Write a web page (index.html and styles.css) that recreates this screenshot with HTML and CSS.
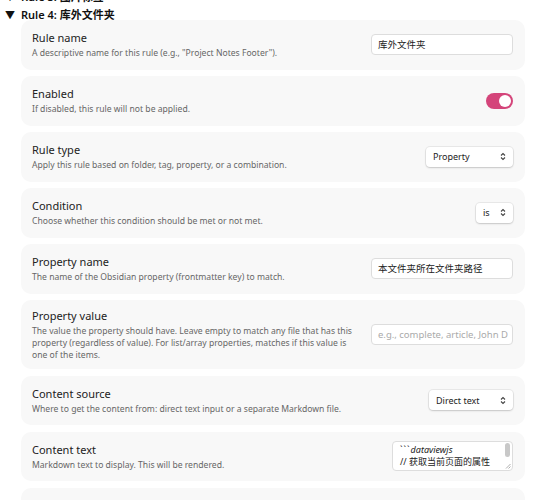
FILE: index.html
```html
<!DOCTYPE html>
<html>
<head>
<meta charset="utf-8">
<link rel="stylesheet" href="styles.css">
</head>
<body>
<div class="page">
  <div class="close">
    <svg width="9" height="9" viewBox="0 0 9 9"><path d="M1 1L8 8M8 1L1 8" stroke="#777" stroke-width="1" fill="none"/></svg>
  </div>
  <div class="rule-head prev"><span class="tri">▼</span><span>Rule 3: 图片标签</span></div>
  <div class="rule-head"><span class="tri">▼</span><span>Rule 4: 库外文件夹</span></div>
  <div class="list">
    <div class="item">
      <div class="info"><div class="name">Rule name</div><div class="desc">A descriptive name for this rule (e.g., "Project Notes Footer").</div></div>
      <div class="control"><div class="input">库外文件夹</div></div>
    </div>
    <div class="item">
      <div class="info"><div class="name">Enabled</div><div class="desc">If disabled, this rule will not be applied.</div></div>
      <div class="control"><div class="toggle"><div class="knob"></div></div></div>
    </div>
    <div class="item">
      <div class="info"><div class="name">Rule type</div><div class="desc">Apply this rule based on folder, tag, property, or a combination.</div></div>
      <div class="control"><div class="select sel-prop"><span>Property</span><svg width="6" height="9" viewBox="0 0 6 9"><path d="M1 3.5L3 1.5L5 3.5M1 5.5L3 7.5L5 5.5" stroke="#444" stroke-width="1.1" fill="none"/></svg></div></div>
    </div>
    <div class="item">
      <div class="info"><div class="name">Condition</div><div class="desc">Choose whether this condition should be met or not met.</div></div>
      <div class="control"><div class="select sel-is"><span>is</span><svg width="6" height="9" viewBox="0 0 6 9"><path d="M1 3.5L3 1.5L5 3.5M1 5.5L3 7.5L5 5.5" stroke="#444" stroke-width="1.1" fill="none"/></svg></div></div>
    </div>
    <div class="item">
      <div class="info"><div class="name">Property name</div><div class="desc">The name of the Obsidian property (frontmatter key) to match.</div></div>
      <div class="control"><div class="input">本文件夹所在文件夹路径</div></div>
    </div>
    <div class="item">
      <div class="info"><div class="name">Property value</div><div class="desc narrow">The value the property should have. Leave empty to match any file that has this property (regardless of value). For list/array properties, matches if this value is one of the items.</div></div>
      <div class="control"><div class="input placeholder">e.g., complete, article, John D</div></div>
    </div>
    <div class="item">
      <div class="info"><div class="name">Content source</div><div class="desc">Where to get the content from: direct text input or a separate Markdown file.</div></div>
      <div class="control"><div class="select sel-src"><span>Direct text</span><svg width="6" height="9" viewBox="0 0 6 9"><path d="M1 3.5L3 1.5L5 3.5M1 5.5L3 7.5L5 5.5" stroke="#444" stroke-width="1.1" fill="none"/></svg></div></div>
    </div>
    <div class="item">
      <div class="info"><div class="name">Content text</div><div class="desc">Markdown text to display. This will be rendered.</div></div>
      <div class="control">
        <div class="textarea">
          <div class="code"><div><span class="ticks">```</span><span class="it">dataviewjs</span></div><div>// 获取当前页面的属性</div></div>
          <div class="scroll"><div class="thumb"></div></div>
          <svg class="grip" width="6" height="6" viewBox="0 0 6 6"><path d="M5.5 1L1 5.5M5.5 3.5L3.5 5.5" stroke="#999" stroke-width="0.8"/></svg>
        </div>
      </div>
    </div>
    <div class="item"></div>
  </div>
</div>
</body>
</html>
```
FILE: styles.css
```css
html, body { margin: 0; padding: 0; background: #fff; }
body { font-family: "Noto Sans", "Noto Sans CJK SC", sans-serif; color: #222; overflow: hidden; height: 500px; }
.page { position: relative; padding: 0 31px 0 0; }
.close { position: absolute; right: 4px; top: 2px; width: 9px; height: 9px; }
.close svg { display: block; }
.rule-head { display: flex; align-items: center; height: 18px; font-size: 11px; font-weight: 600; color: #111; padding-left: 5px; gap: 5px; }
.rule-head.prev { margin-top: -13px; }
.rule-head .tri { font-size: 10px; width: 11px; }
.list { padding-left: 21px; margin-top: -3px; display: flex; flex-direction: column; gap: 6.5px; }
.item { background: #f8f8f8; border-radius: 10px; min-height: 49.5px; box-sizing: border-box; padding: 8px 12px 8px 11px; display: flex; align-items: center; }
.info { flex: 1; min-width: 0; }
.name { font-size: 11px; line-height: 16px; color: #222; }
.desc { font-size: 8.6px; line-height: 12px; color: #666; margin-top: 1px; }
.desc.narrow { max-width: 325px; }
.control { display: flex; justify-content: flex-end; margin-left: 16px; }
.input { width: 142px; height: 21px; box-sizing: border-box; border: 1px solid #ddd; border-radius: 4px; background: #fff; font-size: 9.5px; line-height: 19px; padding: 0 6px; white-space: nowrap; overflow: hidden; color: #222; }
.input.placeholder { color: #aaa; }
.toggle { width: 27px; height: 16px; border-radius: 8px; background: #d4457a; position: relative; margin-top: 1px; }
.knob { position: absolute; right: 2px; top: 2px; width: 12px; height: 12px; border-radius: 50%; background: #fff; }
.select { height: 20px; box-sizing: border-box; border-radius: 4px; background: #fff; box-shadow: 0 0 0 1px rgba(0,0,0,0.06), 0 1px 2px rgba(0,0,0,0.15); display: flex; align-items: center; justify-content: space-between; padding: 0 7px 0 7px; font-size: 9px; color: #222; }
.sel-prop { width: 87px; }
.sel-is { width: 37px; }
.sel-src { width: 84px; }
.textarea { position: relative; width: 121px; height: 30px; box-sizing: border-box; border: 1px solid #ddd; border-radius: 4px; background: #fff; overflow: hidden; }
.code { font-size: 9px; line-height: 12px; padding: 2px 0 0 7px; color: #222; white-space: nowrap; }
.ticks { letter-spacing: 1px; }
.it { font-style: italic; }
.scroll { position: absolute; right: 1px; top: 1px; width: 6px; height: 20px; }
.thumb { width: 5px; height: 14px; border-radius: 3px; background: #c8c8c8; }
.grip { position: absolute; right: 1px; bottom: 1px; }
```
